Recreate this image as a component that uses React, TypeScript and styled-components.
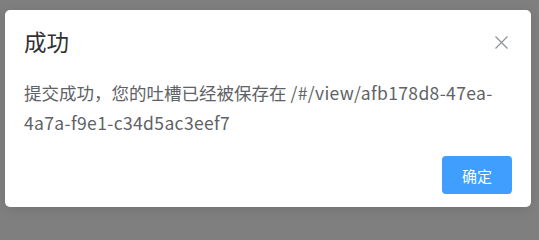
import React from "react";
import styled, { createGlobalStyle } from "styled-components";

const GlobalStyle = createGlobalStyle`
  html, body {
    margin: 0;
    padding: 0;
    background: #7f7f7f;
  }
  body {
    font-family: "Noto Sans CJK SC", "Noto Sans", sans-serif;
  }
`;

const Overlay = styled.div`
  width: 539px;
  height: 218px;
  box-sizing: border-box;
  padding: 10px 0 0 5px;
  background: #7f7f7f;
`;

const Box = styled.div`
  width: 526px;
  box-sizing: border-box;
  background: #fff;
  border-radius: 5px;
  padding-bottom: 13px;
  box-shadow: 0 2px 12px rgba(0, 0, 0, 0.1);
  display: flex;
  flex-direction: column;
`;

const Header = styled.div`
  display: flex;
  align-items: flex-start;
  justify-content: space-between;
  padding: 20px 19px 12px 19px;
`;

const Title = styled.span`
  font-size: 22.5px;
  line-height: 1;
  color: #303133;
`;

const CloseButton = styled.button`
  border: none;
  background: transparent;
  padding: 0;
  margin: 2px 1px 2px 0;
  width: 20px;
  height: 20px;
  display: flex;
  align-items: center;
  justify-content: center;
  cursor: pointer;
`;

const Content = styled.div`
  padding: 12px 19px 12px 19px;
  font-size: 17.5px;
  line-height: 30px;
  color: #606266;
  word-break: normal;
`;

const LinkPath = styled.span`
  letter-spacing: 0.36px;
`;

const Footer = styled.div`
  display: flex;
  justify-content: flex-end;
  padding: 6px 19px 0 19px;
`;

const PrimaryButton = styled.button`
  width: 70px;
  height: 38px;
  border: none;
  border-radius: 4px;
  background: #409eff;
  color: #fff;
  font-family: "Noto Sans CJK SC", sans-serif;
  font-size: 15px;
  cursor: pointer;
`;

const App: React.FC = () => {
  return (
    <>
      <GlobalStyle />
      <Overlay>
        <Box>
          <Header>
            <Title>成功</Title>
            <CloseButton aria-label="关闭">
              <svg width="13" height="13" viewBox="0 0 13 13">
                <path
                  d="M0.5 0.5 L12.5 12.5 M12.5 0.5 L0.5 12.5"
                  stroke="#909399"
                  strokeWidth="1.3"
                  fill="none"
                />
              </svg>
            </CloseButton>
          </Header>
          <Content>
            提交成功，您的吐槽已经被保存在{" "}
            <LinkPath>/#/view/afb178d8-47ea-4a7a-f9e1-c34d5ac3eef7</LinkPath>
          </Content>
          <Footer>
            <PrimaryButton>确定</PrimaryButton>
          </Footer>
        </Box>
      </Overlay>
    </>
  );
};

export default App;
